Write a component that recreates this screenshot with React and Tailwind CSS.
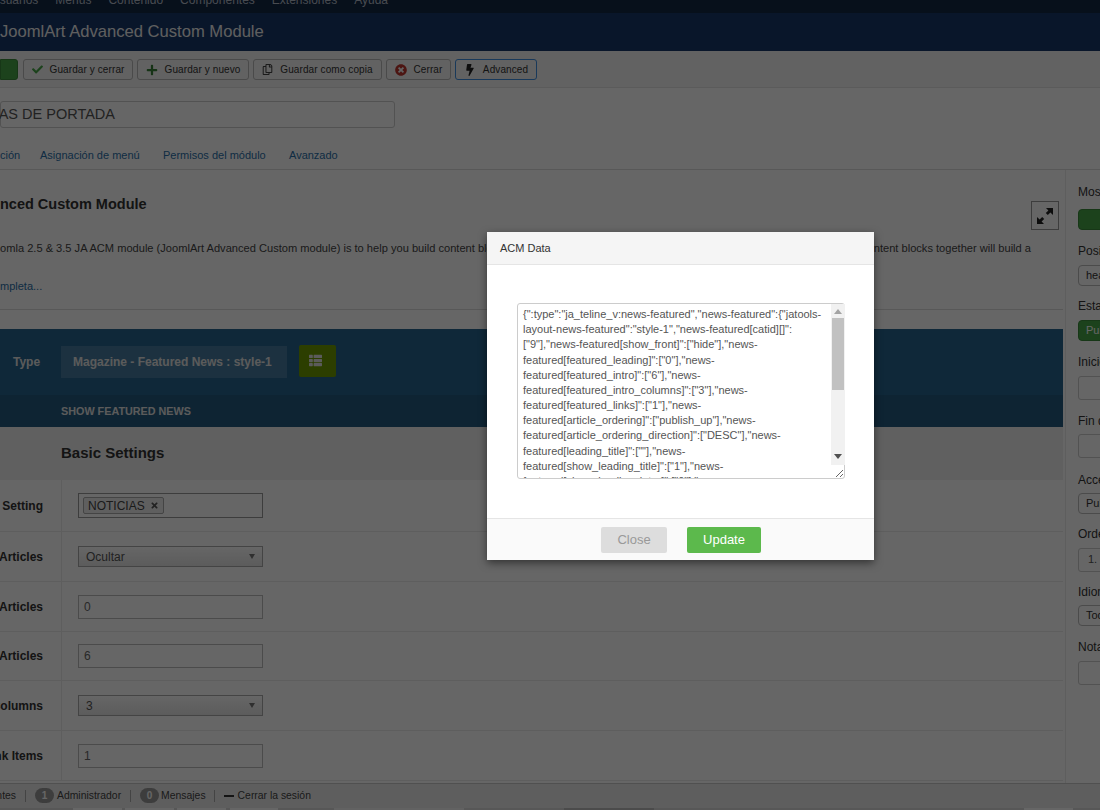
import React from 'react';
import { FaCheck, FaPlus, FaRegCopy, FaTimesCircle, FaBolt, FaThList, FaTimes } from 'react-icons/fa';

const acmData =
  '{":type":"ja_teline_v:news-featured","news-featured":{"jatools-layout-news-featured":"style-1","news-featured[catid][]":["9"],"news-featured[show_front]":["hide"],"news-featured[featured_leading]":["0"],"news-featured[featured_intro]":["6"],"news-featured[featured_intro_columns]":["3"],"news-featured[featured_links]":["1"],"news-featured[article_ordering]":["publish_up"],"news-featured[article_ordering_direction]":["DESC"],"news-featured[leading_title]":[""],"news-featured[show_leading_title]":["1"],"news-featured[show_leading_intro]":["0"],"news-featured[show_leading_image]":["1"],"news-featured[show_leading_category]":["1"],"news-featured[show_leading_author]":["0"],"news-featured[show_leading_date]":["1"],"news-featured[show_leading_hits]":["0"],"news-featured[intro_title]":[""],"news-featured[show_intro_title]":["1"],"news-featured[show_intro_text]":["0"],"news-featured[show_intro_image]":["1"],"news-featured[show_intro_category]":["1"],"news-featured[show_intro_author]":["0"],"news-featured[show_intro_date]":["1"],"news-featured[links_title]":[""]}}';

const ToolbarButton = ({ icon, label, className = 'w-[110px] border-[#b8b8b8]' }) => (
  <div className={'flex h-[21px] items-center justify-center gap-[7px] rounded-[3px] border bg-[#f5f5f5] text-[10px] text-[#333] ' + className}>
    {icon}
    <span className="tracking-[0.1px]">{label}</span>
  </div>
);

const SettingRow = ({ label, height = 'h-[50px]', children }) => (
  <div className={'flex border-b border-[#eaeaea] ' + height}>
    <div className="flex w-[62px] shrink-0 items-center justify-end overflow-hidden border-r border-[#eaeaea] pr-[18px] text-[12px] font-bold whitespace-nowrap text-[#333]">
      {label}
    </div>
    <div className="flex items-center pl-[16px]">{children}</div>
  </div>
);

const TextBox = ({ value }) => (
  <div className="flex h-[24px] w-[185px] items-center border border-[#bbb] bg-white pl-[5px] text-[12px] text-[#666]">
    {value}
  </div>
);

const SelectBox = ({ value }) => (
  <div className="flex h-[21px] w-[185px] items-center justify-between border border-[#aaa] bg-linear-to-b from-white to-[#e6e6e6] pr-[7px] pl-[7px] text-[12px] text-[#555]">
    <span>{value}</span>
    <span className="h-0 w-0 border-x-[3px] border-t-[5px] border-x-transparent border-t-[#777]" />
  </div>
);

const SideField = ({ label, gap = 'mb-[4.5px]', after = 'mb-[13px]', children }) => (
  <div className={after}>
    <div className={'h-[17px] text-[12px] leading-[17px] whitespace-nowrap text-[#333] ' + gap}>{label}</div>
    {children}
  </div>
);

const SidePill = ({ children, className = 'border-[#bbb] bg-white text-[#333]' }) => (
  <div className={'flex h-[21px] w-[200px] items-center rounded-[4px] border pl-[7px] text-[11px] ' + className}>
    {children}
  </div>
);

const SideInput = ({ children }) => (
  <div className="flex h-[24px] w-[200px] items-center rounded-[3px] border border-[#ccc] bg-white pl-[9px] text-[11px] text-[#555]">
    {children}
  </div>
);

const Sep = () => <div className="h-[12px] w-px bg-[#aaa]" />;

const Badge = ({ n }) => (
  <span className="flex h-[15px] w-[19px] items-center justify-center rounded-full bg-[#999] text-[10px] font-bold text-white">
    {n}
  </span>
);

const App = () => {
  return (
    <div className="relative flex h-[810px] w-[1100px] flex-col overflow-hidden bg-white font-['Liberation_Sans',Arial,sans-serif]">
      <nav className="h-[13px] shrink-0 overflow-hidden bg-[#122845]">
        <div className="-mt-[7px] -ml-[9px] flex gap-[17px] text-[12px] leading-[14px] text-[#b4bcc8]">
          <span>Usuarios</span>
          <span>Menús</span>
          <span>Contenido</span>
          <span>Componentes</span>
          <span>Extensiones</span>
          <span>Ayuda</span>
        </div>
      </nav>

      <header className="flex h-[38px] shrink-0 items-center bg-[#17386a]">
        <h1 className="text-[16.6px] font-medium text-[#eee]">JoomlArt Advanced Custom Module</h1>
      </header>

      <div className="flex h-[37px] shrink-0 items-start gap-[4px] border-b border-[#e4e4e4] bg-[#f4f4f4] pt-[8px]">
        <div className="mr-[1px] h-[21px] w-[18px] rounded-r-[3px] border border-[#3a8a3a] bg-[#46a546]" />
        <ToolbarButton icon={<FaCheck className="text-[11px] text-[#46a546]" />} label="Guardar y cerrar" className="w-[110px] border-[#b8b8b8]" />
        <ToolbarButton icon={<FaPlus className="text-[12px] text-[#378137]" />} label="Guardar y nuevo" className="w-[112px] border-[#b8b8b8]" />
        <ToolbarButton icon={<FaRegCopy className="text-[11px] text-[#444]" />} label="Guardar como copia" className="w-[129px] border-[#b8b8b8]" />
        <ToolbarButton icon={<FaTimesCircle className="text-[12px] text-[#bd362f]" />} label="Cerrar" className="w-[65px] border-[#b8b8b8]" />
        <ToolbarButton icon={<FaBolt className="text-[12px] text-[#222]" />} label="Advanced" className="w-[82px] border-[#3f8fe0]" />
      </div>

      <div className="flex h-[82px] shrink-0 flex-col border-b border-[#ddd]">
        <div className="mt-[13px] flex h-[27px] w-[395px] items-center justify-end rounded-[3px] border border-[#ccc] pr-[279px] text-[14.5px] whitespace-nowrap text-[#555]">
          AS DE PORTADA
        </div>
        <div className="mt-[19px] flex text-[11px] text-[#2a6fa8]">
          <span className="flex w-[40px] overflow-hidden">
            <span className="w-[17px] text-right">ción</span>
          </span>
          <span className="w-[123px]">Asignación de menú</span>
          <span className="w-[126px]">Permisos del módulo</span>
          <span>Avanzado</span>
        </div>
      </div>

      <div className="flex min-h-0 flex-1 overflow-hidden">
        <main className="w-[1063px] shrink-0">
          <div className="relative h-[140px] border-b border-[#ddd]">
            <h2 className="absolute top-[24px] left-0 text-[14.5px] font-bold whitespace-nowrap text-[#333]">nced Custom Module</h2>
            <div className="absolute top-[31px] left-[1031px] flex h-[29px] w-[28px] items-center justify-center border border-[#999] bg-white">
              <svg width="20" height="20" viewBox="0 0 20 20" fill="#222">
                <path d="M11 2h7v7l-2.6-2.6-2.6 2.6-2-2 2.6-2.6zM9 18H2v-7l2.6 2.6 2.6-2.6 2 2-2.6 2.6z" />
              </svg>
            </div>
            <p className="absolute top-[70px] left-0 flex w-[1031px] justify-between text-[11.1px] leading-[17px] text-[#444]">
              <span>omla 2.5 &amp; 3.5 JA ACM module (JoomlArt Advanced Custom module) is to help you build content blocks</span>
              <span>content blocks together will build a</span>
            </p>
            <a className="absolute top-[108px] left-0 text-[11px] leading-[17px] text-[#2a6fa8]">mpleta...</a>
          </div>

          <div className="mt-[19px] h-[66px] bg-[#276590]">
            <div className="flex items-center pt-[17px]">
              <div className="w-[61px] pl-[13px] text-[12px] font-bold text-[#e4e4e4]">Type</div>
              <div className="flex h-[32px] w-[226px] items-center bg-white/15 pl-[12px] text-[12px] font-bold text-[#e4e4e4]">
                Magazine - Featured News : style-1
              </div>
              <div className="-mt-[2px] ml-[12px] flex h-[32px] w-[37px] items-center justify-center rounded-[2px] bg-[#6f9c00]">
                <FaThList className="-mt-[2px] -ml-[5px] text-[13px] text-[#e4e4e4]" />
              </div>
            </div>
          </div>
          <div className="flex h-[32px] items-center bg-[#235b80] pl-[61px] text-[10.8px] font-bold text-[#e4e4e4]">
            SHOW FEATURED NEWS
          </div>
          <div className="flex h-[53px] items-center bg-[#f0f0f0] pl-[61px] text-[15px] font-bold text-[#333]">
            Basic Settings
          </div>

          <SettingRow label="Category Setting" height="h-[52px]">
            <div className="flex h-[25px] w-[185px] items-center border border-[#999] bg-white pl-[4px]">
              <span className="flex h-[17px] items-center gap-[5px] rounded-[2px] border border-[#aaa] bg-[#eee] pr-[4px] pl-[4px] text-[12px] text-[#444]">
                NOTICIAS
                <FaTimes className="text-[9px] text-[#555]" />
              </span>
            </div>
          </SettingRow>
          <SettingRow label="Show Front Articles"><SelectBox value="Ocultar" /></SettingRow>
          <SettingRow label="Leading Articles"><TextBox value="0" /></SettingRow>
          <SettingRow label="Intro Articles" height="h-[49px]"><TextBox value="6" /></SettingRow>
          <SettingRow label="Intro Columns"><SelectBox value="3" /></SettingRow>
          <SettingRow label="Link Items"><TextBox value="1" /></SettingRow>
        </main>

        <aside className="ml-[2px] border-l border-[#eaeaea] pt-[13.5px] pl-[12px]">
          <SideField label="Mostrar título" gap="mb-[8px]" after="mb-[13.5px]">
            <SidePill className="border-[#3a8a3a] bg-[#46a546] text-white" />
          </SideField>
          <SideField label="Posición" after="mb-[12.5px]">
            <SidePill>header</SidePill>
          </SideField>
          <SideField label="Estado" after="mb-[13.5px]">
            <SidePill className="border-[#3a8a3a] bg-[#46a546] text-white">Publicado</SidePill>
          </SideField>
          <SideField label="Inicio de publicación"><SideInput /></SideField>
          <SideField label="Fin de publicación" after="mb-[13.5px]"><SideInput /></SideField>
          <SideField label="Acceso" after="mb-[12px]"><SidePill>Public</SidePill></SideField>
          <SideField label="Ordenación" after="mb-[12px]"><SideInput>1.</SideInput></SideField>
          <SideField label="Idioma"><SidePill>Todos</SidePill></SideField>
          <SideField label="Nota"><SideInput /></SideField>
        </aside>
      </div>

      <footer className="flex h-[25px] shrink-0 items-center border-t border-[#c8c8c8] bg-[#ebebeb] text-[10.4px] text-[#444]">
        <span className="flex w-[16px] justify-end overflow-hidden whitespace-nowrap">ntes</span>
        <div className="ml-[9px]"><Sep /></div>
        <div className="ml-[9px] flex items-center gap-[3px]">
          <Badge n="1" />
          <span>Administrador</span>
        </div>
        <div className="ml-[9px]"><Sep /></div>
        <div className="ml-[9px] flex items-center gap-[2px]">
          <Badge n="0" />
          <span>Mensajes</span>
        </div>
        <div className="ml-[8px]"><Sep /></div>
        <div className="ml-[9px] flex items-center gap-[4px]">
          <span className="h-[2px] w-[10px] bg-[#333]" />
          <span>Cerrar la sesión</span>
        </div>
      </footer>

      <div className="flex h-[2px] shrink-0 bg-[#d9d9d9]">
        <div className="w-[73px]" />
        <div className="w-[49px] bg-white" />
        <div className="ml-[3px] w-[49px] bg-white" />
        <div className="ml-[3px] w-[49px] bg-white" />
        <div className="ml-[4px] w-[48px] bg-white" />
        <div className="ml-[56px] w-[130px] bg-[#f4f4f4]" />
        <div className="ml-[100px] w-[90px] bg-[#bbb]" />
        <div className="ml-[370px] w-[49px] bg-white" />
      </div>

      {/* dimmed backdrop */}
      <div className="absolute inset-0 bg-black/60" />

      {/* ACM Data modal */}
      <div className="absolute top-[232px] left-[487px] flex h-[328px] w-[387px] flex-col rounded-[2px] bg-white shadow-[0_3px_9px_rgba(0,0,0,0.5)]">
        <div className="flex h-[33px] shrink-0 items-center border-b border-[#e5e5e5] bg-[#f5f5f5] pl-[13px] text-[11px] text-[#333]">
          ACM Data
        </div>
        <div className="relative flex-1 pt-[38px] pl-[30px]">
          <textarea
            readOnly
            defaultValue={acmData}
            className="h-[176px] w-[328px] rounded-[3px] border border-[#ccc] py-[3px] pr-[15px] pl-[5px] text-[11px] leading-[15.17px] text-[#555] outline-none"
          />
          {/* scrollbar, the headless browser hides the native one */}
          <div className="absolute top-[39px] left-[344px] h-[161px] w-[14px] bg-[#f1f1f1]">
            <span className="absolute top-[5px] left-[3px] h-0 w-0 border-x-[4px] border-b-[5px] border-x-transparent border-b-[#a3a3a3]" />
            <div className="absolute top-[14px] left-px h-[72px] w-[12px] bg-[#c1c1c1]" />
            <span className="absolute top-[150px] left-[3px] h-0 w-0 border-x-[4px] border-t-[5px] border-x-transparent border-t-[#505050]" />
          </div>
        </div>
        <div className="flex h-[42px] shrink-0 items-start justify-center gap-[20px] border-t border-[#e5e5e5] bg-[#fafafa] pt-[8px] pl-[1px]">
          <button className="h-[26px] w-[66px] rounded-[2px] bg-[#ddd] text-[13px] text-[#999]">Close</button>
          <button className="h-[26px] w-[74px] rounded-[2px] bg-[#5cb94c] text-[13px] text-white">Update</button>
        </div>
      </div>
    </div>
  );
};

export default App;
